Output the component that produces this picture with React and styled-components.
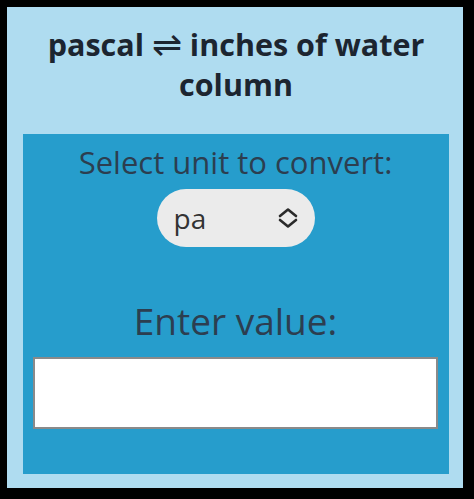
import React from "react";
import styled, { createGlobalStyle } from "styled-components";

const Global = createGlobalStyle`
  html, body { margin: 0; padding: 0; background: #000; }
  body { font-family: "Open Sans", "Noto Sans", sans-serif; }
  * { box-sizing: border-box; }
`;

const Frame = styled.div`
  width: 474px;
  height: 499px;
  border-style: solid;
  border-color: #000;
  border-width: 7px 11px 11px 7px;
  background: #afdcf0;
  padding: 17px 14px 14px 16px;
  display: flex;
  flex-direction: column;
`;

const Title = styled.h1`
  margin: 0;
  height: 80px;
  font-size: 30.5px;
  line-height: 40px;
  font-weight: 700;
  color: #1c2530;
  text-align: center;
`;

const Arrows = styled.span`
  font-family: "DejaVu Sans", sans-serif;
  font-weight: 200;
  font-size: 36px;
  line-height: 0;
  vertical-align: -1px;
`;

const Panel = styled.div`
  margin-top: 30px;
  flex: 1;
  background: #269dcc;
  padding: 10px 11px 0 10px;
  display: flex;
  flex-direction: column;
  align-items: center;
`;

const Label = styled.label`
  font-size: ${(p) => p.$size}px;
  line-height: 1.2;
  color: #2c3e50;
  margin-top: ${(p) => p.$top || 0}px;
`;

const SelectPill = styled.div`
  margin-top: 8px;
  width: 158px;
  height: 58px;
  border-radius: 29px;
  background: #ebebeb;
  display: flex;
  align-items: center;
  padding: 0 16px 0 17px;
`;

const Select = styled.select`
  appearance: none;
  -webkit-appearance: none;
  border: none;
  outline: none;
  background: transparent;
  flex: 1;
  min-width: 0;
  font-family: "Open Sans", sans-serif;
  font-size: 28px;
  color: #333;
  padding: 0;
`;

const ValueInput = styled.input`
  margin-top: 13px;
  width: 100%;
  height: 72px;
  border: 2px solid #8a8a8a;
  background: #fff;
  font-family: "Open Sans", sans-serif;
  font-size: 28px;
  padding: 0 10px;
  outline: none;
`;

const Chevrons = () => (
  <svg width="22" height="22" viewBox="0 0 22 22" fill="none" stroke="#2a2a2a" strokeWidth="2.6" strokeLinecap="round" strokeLinejoin="round">
    <path d="M3 9 L11 2.5 L19 9" />
    <path d="M3 13 L11 19.5 L19 13" />
  </svg>
);

export default function App() {
  return (
    <>
      <Global />
      <Frame>
        <Title>
          pascal <Arrows>⇌</Arrows> inches of water column
        </Title>
        <Panel>
          <Label $size={31} htmlFor="unit">Select unit to convert:</Label>
          <SelectPill>
            <Select id="unit" defaultValue="pa">
              <option value="pa">pa</option>
              <option value="inh2o">inH2O</option>
            </Select>
            <Chevrons />
          </SelectPill>
          <Label $size={37} $top={52} htmlFor="val">Enter value:</Label>
          <ValueInput id="val" type="text" />
        </Panel>
      </Frame>
    </>
  );
}
